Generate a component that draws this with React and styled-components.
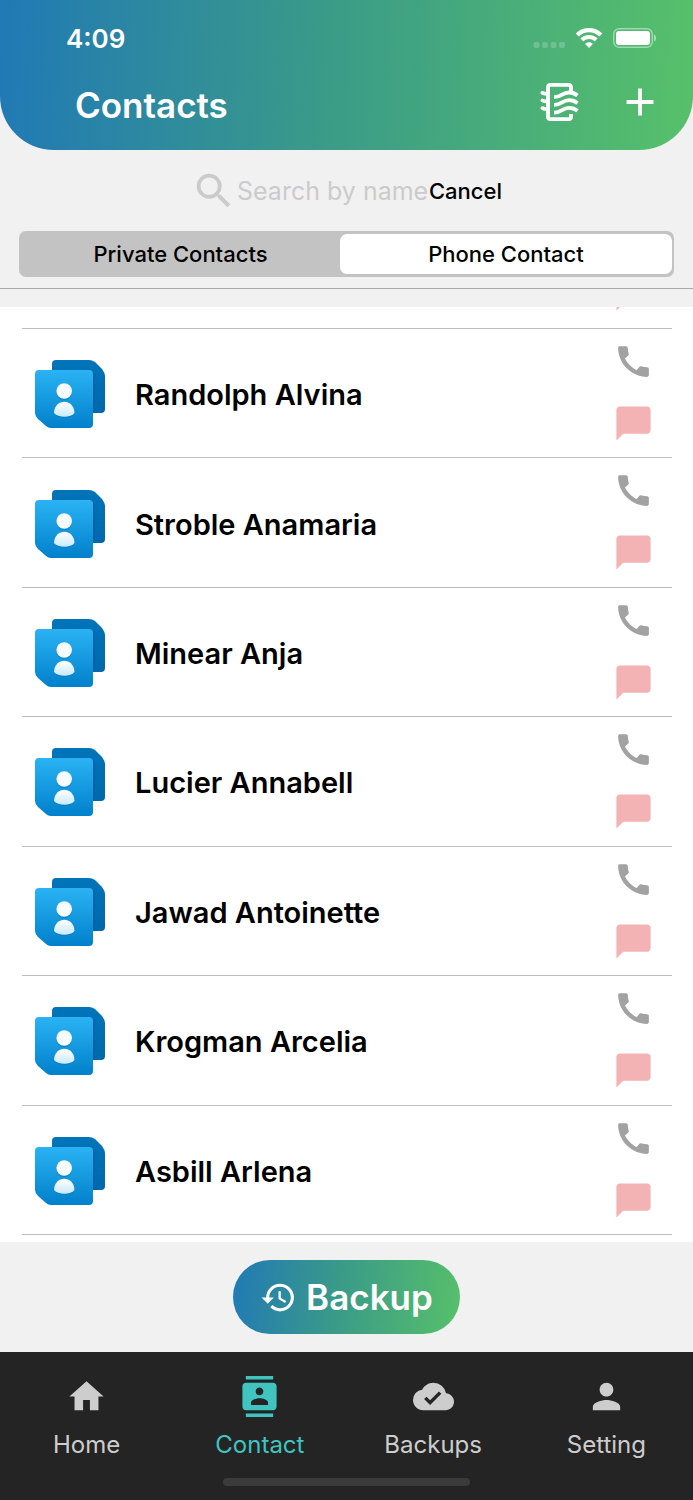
import React, { useState } from "react";
import styled, { createGlobalStyle } from "styled-components";
import {
  MdAdd,
  MdCall,
  MdChatBubble,
  MdCloudDone,
  MdContacts,
  MdHistory,
  MdHome,
  MdPerson,
  MdSearch,
} from "react-icons/md";

const GlobalStyle = createGlobalStyle`
  * {
    box-sizing: border-box;
  }

  body {
    margin: 0;
    background: #f1f1f1;
    font-family: Inter, "Liberation Sans", sans-serif;
  }

  button,
  input {
    font-family: inherit;
    padding: 0;
    border: none;
    background: none;
  }

  button {
    cursor: pointer;
  }

  svg {
    display: block;
    flex: none;
  }
`;

const gradientStops = "#2179b5 0%, #3a9b88 47%, #57c06a 100%";

const Screen = styled.div`
  min-height: 100vh;
  display: flex;
  flex-direction: column;
`;

const Header = styled.header`
  height: 150px;
  color: #fff;
  background: linear-gradient(92deg, ${gradientStops});
  border-radius: 0 0 54px 54px;
`;

const StatusBar = styled.div`
  display: flex;
  align-items: center;
  justify-content: space-between;
  height: 76px;
  padding: 0 36px 0 66px;
  font-size: 26px;
  font-weight: 600;
`;

const StatusIcons = styled.div`
  display: flex;
  align-items: center;
  gap: 10px;
`;

const TitleRow = styled.div`
  display: flex;
  align-items: flex-start;
  justify-content: space-between;
  padding: 3px 30px 0 75px;
`;

const Title = styled.h1`
  margin: 0;
  font-size: 35px;
  font-weight: 600;
  line-height: 52px;
`;

const Actions = styled.div`
  display: flex;
  align-items: center;
  gap: 37px;
`;

const IconButton = styled.button`
  display: flex;
  color: ${(props) => props.$color || "#fff"};
`;

const Search = styled.form`
  display: flex;
  align-items: center;
  justify-content: center;
  height: 81px;
`;

const SearchLabel = styled.label`
  display: flex;
  align-items: center;
  color: #cbcbcb;
`;

const SearchInput = styled.input`
  width: 192px;
  font-size: 25px;
  outline: none;
  color: #000;

  &::placeholder {
    color: #cbcbcb;
    opacity: 1;
  }
`;

const Cancel = styled.button`
  font-size: 22px;
  font-weight: 500;
  color: #000;
`;

const Tabs = styled.div`
  display: flex;
  height: 46px;
  margin: 0 19px;
  padding: 3px 2px;
  border-radius: 7px;
  background: #c3c3c3;
`;

const Tab = styled.button`
  flex: ${(props) => (props.$active ? "1 1 51%" : "1 1 49%")};
  border-radius: 7px;
  background: ${(props) => (props.$active ? "#fff" : "transparent")};
  color: #000;
  font-size: 22px;
  font-weight: 500;
`;

const Divider = styled.hr`
  width: 100%;
  margin: 11px 0 18px;
  border: none;
  border-top: 1px solid #a9a9a9;
`;

const List = styled.ul`
  flex: 1;
  display: flex;
  flex-direction: column;
  margin: 0;
  padding: 0 21px 7px 22px;
  list-style: none;
  background: #fff;
`;

const Row = styled.li`
  flex: 1;
  display: flex;
  align-items: center;
  min-height: 120px;
  padding: 3px 18px 0 13px;
  border-bottom: 1px solid #bdbdbd;
`;

const ClippedRow = styled.li`
  display: flex;
  flex-direction: column;
  align-items: flex-end;
  justify-content: flex-end;
  height: 22px;
  padding: 0 18px 14px 0;
  overflow: hidden;
  border-bottom: 1px solid #bdbdbd;
`;

const Name = styled.span`
  flex: 1;
  padding-left: 30px;
  font-size: 29px;
  font-weight: 600;
  color: #000;
`;

const RowActions = styled.div`
  align-self: flex-start;
  display: flex;
  flex-direction: column;
  gap: 21px;
  padding-top: 9px;
`;

const BackupBar = styled.div`
  display: flex;
  align-items: center;
  justify-content: center;
  height: 110px;
`;

const BackupButton = styled.button`
  display: flex;
  align-items: center;
  justify-content: center;
  gap: 9px;
  width: 227px;
  height: 74px;
  border-radius: 37px;
  color: #fff;
  background: linear-gradient(98deg, ${gradientStops});
  font-size: 35px;
  font-weight: 600;
`;

const BottomNav = styled.nav`
  height: 148px;
  padding: 24px 0 14px;
  display: flex;
  flex-direction: column;
  justify-content: space-between;
  background: #242424;
`;

const NavItems = styled.div`
  display: grid;
  grid-template-columns: repeat(4, 1fr);
`;

const NavLink = styled.a`
  display: flex;
  flex-direction: column;
  align-items: center;
  gap: 12px;
  color: ${(props) => (props.$active ? "#40c4c0" : "#cdcdcd")};
  font-size: 24px;
  line-height: 32px;
  text-decoration: none;
`;

const HomeIndicator = styled.div`
  align-self: center;
  width: 247px;
  height: 8px;
  border-radius: 4px;
  background: #3b3b3b;
`;

const SignalIcon = () => (
  <svg width="32" height="20" viewBox="0 0 32 20" fill="#fff" opacity="0.2">
    <rect x="0.5" y="14" width="6" height="6" rx="2" />
    <rect x="9" y="14" width="6" height="6" rx="2" />
    <rect x="17.500" y="14" width="6" height="6" rx="2" />
    <rect x="26" y="14" width="6" height="6" rx="2" />
  </svg>
);

const WifiIcon = () => (
  <svg width="28" height="20" viewBox="0 0 28 20" fill="none" stroke="#fff">
    <path d="M2.200 7C9 .4 19 .4 25.800 7" strokeWidth="4.200" />
    <path d="M6.800 11.900c4.200-3.900 10.200-3.900 14.400 0" strokeWidth="4.200" />
    <path d="M14 20l-4-4.200c2.300-2.100 5.700-2.100 8 0z" fill="#fff" stroke="none" />
  </svg>
);

const BatteryIcon = () => (
  <svg width="44" height="20" viewBox="0 0 44 20">
    <rect x="0.7" y="0.7" width="38.6" height="18.6" rx="5.5" fill="none" stroke="#fff" strokeWidth="1.4" opacity="0.45" />
    <rect x="3" y="3" width="34" height="14" rx="3" fill="#fff" />
    <path d="M41 6.5c2.8 1 2.8 6 0 7z" fill="#fff" opacity="0.5" />
  </svg>
);

const NotebookIcon = () => (
  <svg width="40" height="40" viewBox="0 0 40 40" fill="none" stroke="#fff" strokeWidth="3.8">
    <path
      d="M31 10V5.300Q31 2.900 28.600 2.900H10.400Q8 2.900 8 5.300V34.700Q8 37.100 10.400 37.100H28.600Q31 37.100 31 34.700V32"
      strokeLinejoin="round"
    />
    <path
      d="M2.500 10.800Q4 11.800 8 11.800M2.500 18.500Q4 19.500 8 19.500M2.500 26.200Q4 27.200 8 27.200"
      strokeLinecap="round"
    />
    <path d="M14 15.200C22 15.200 22 10.500 29 10.500Q34 10.500 37.500 13.500M14 22.900C22 22.900 22 18.200 29 18.200Q34 18.200 37.500 21.200M14 30.600C22 30.600 22 25.900 29 25.900Q34 25.900 37.500 28.900" />
  </svg>
);

const ContactLogo = () => (
  <svg width="70" height="69" viewBox="0 0 70 69">
    <defs>
      <linearGradient id="back" x1="0" y1="0" x2="0" y2="1">
        <stop offset="0" stopColor="#0074ba" />
        <stop offset="1" stopColor="#0068ad" />
      </linearGradient>
      <linearGradient id="front" x1="0" y1="0" x2="0" y2="1">
        <stop offset="0" stopColor="#2ab3f4" />
        <stop offset="1" stopColor="#0180cb" />
      </linearGradient>
      <linearGradient id="person" x1="0" y1="0" x2="0" y2="1">
        <stop offset="0" stopColor="#fff" />
        <stop offset="1" stopColor="#c9e9fc" />
      </linearGradient>
    </defs>
    <path d="M21 0H54Q57 0 60 2L67 9Q70 13 70 16V49Q70 53 66 53H21Q17 53 17 49V4Q17 0 21 0z" fill="url(#back)" />
    <path d="M58 12Q60 12 60 16V53H58z" fill="#005b9c" opacity="0.5" />
    <path d="M4 10H54Q58 10 58 14V64Q58 68 54 68H16Q13 68 11 66L3 59Q0 56 0 53V14Q0 10 4 10z" fill="url(#front)" />
    <ellipse cx="29.200" cy="32" rx="8" ry="8.500" fill="#0474bb" opacity="0.5" />
    <path d="M19 54C19 38 39.500 38 39.500 54C36 59 23 59 19 54z" fill="#0474bb" opacity="0.5" />
    <circle cx="29.200" cy="31" r="7.800" fill="#f5fbff" />
    <path d="M19 53C19.500 38 39 38 39.500 53C36 58 23 58 19 53z" fill="url(#person)" />
  </svg>
);

const contacts = [
  "Randolph Alvina",
  "Stroble Anamaria",
  "Minear Anja",
  "Lucier Annabell",
  "Jawad Antoinette",
  "Krogman Arcelia",
  "Asbill Arlena",
];

const navItems = [
  { label: "Home", Icon: MdHome },
  { label: "Contact", Icon: MdContacts },
  { label: "Backups", Icon: MdCloudDone },
  { label: "Setting", Icon: MdPerson },
];

const App = () => {
  const [query, setQuery] = useState("");
  const [tab, setTab] = useState("Phone Contact");

  return (
    <Screen>
      <GlobalStyle />
      <Header>
        <StatusBar>
          <span>4:09</span>
          <StatusIcons>
            <SignalIcon />
            <WifiIcon />
            <BatteryIcon />
          </StatusIcons>
        </StatusBar>
        <TitleRow>
          <Title>Contacts</Title>
          <Actions>
            <IconButton aria-label="Address book">
              <NotebookIcon />
            </IconButton>
            <IconButton aria-label="Add contact">
              <MdAdd size={46} />
            </IconButton>
          </Actions>
        </TitleRow>
      </Header>

      <Search onSubmit={(e) => e.preventDefault()}>
        <SearchLabel>
          <MdSearch size={46} />
          <SearchInput
            type="text"
            aria-label="Search by name"
            placeholder="Search by name"
            value={query}
            onChange={(e) => setQuery(e.target.value)}
          />
        </SearchLabel>
        <Cancel type="button" onClick={() => setQuery("")}>
          Cancel
        </Cancel>
      </Search>

      <Tabs>
        {["Private Contacts", "Phone Contact"].map((label) => (
          <Tab key={label} $active={tab === label} onClick={() => setTab(label)}>
            {label}
          </Tab>
        ))}
      </Tabs>
      <Divider />

      <List>
        <ClippedRow>
          <IconButton $color="#f3b2b3" aria-label="Message">
            <MdChatBubble size={41} />
          </IconButton>
        </ClippedRow>
        {contacts.map((name) => (
          <Row key={name}>
            <ContactLogo />
            <Name>{name}</Name>
            <RowActions>
              <IconButton $color="#a2a2a2" aria-label={`Call ${name}`}>
                <MdCall size={41} />
              </IconButton>
              <IconButton $color="#f3b2b3" aria-label={`Message ${name}`}>
                <MdChatBubble size={41} />
              </IconButton>
            </RowActions>
          </Row>
        ))}
      </List>

      <BackupBar>
        <BackupButton>
          <MdHistory size={37} />
          Backup
        </BackupButton>
      </BackupBar>

      <BottomNav>
        <NavItems>
          {navItems.map(({ label, Icon }) => (
            <NavLink key={label} href="#" $active={label === "Contact"}>
              <Icon size={41} />
              {label}
            </NavLink>
          ))}
        </NavItems>
        <HomeIndicator />
      </BottomNav>
    </Screen>
  );
};

export default App;
